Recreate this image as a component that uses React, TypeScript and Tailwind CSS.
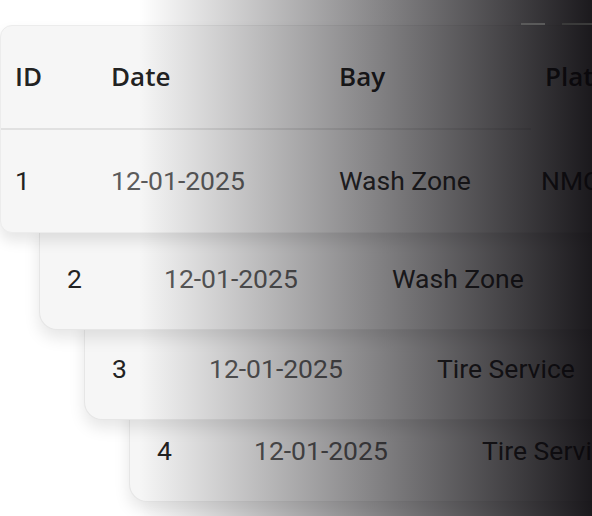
import React from "react";

const rows = [
  { id: "2", date: "12-01-2025", bay: "Wash Zone", plate: "NMC-4821", ml: "ml-[39px]", mt: "mt-[-7px]", z: "z-30" },
  { id: "3", date: "12-01-2025", bay: "Tire Service", plate: "KTR-1290", ml: "ml-[84px]", mt: "mt-[-14px]", z: "z-20" },
  { id: "4", date: "12-01-2025", bay: "Tire Service", plate: "PLX-7743", ml: "ml-[129px]", mt: "mt-[-22px]", z: "z-10" },
];

const roboto = { fontFamily: "Roboto, 'Liberation Sans', sans-serif" };
const open = { fontFamily: "'Open Sans', 'Noto Sans', sans-serif" };

export default function App() {
  return (
    <div className="relative w-[592px] h-[516px] overflow-hidden bg-white">
      <div className="flex flex-col pt-[25px]">
        {/* Card 1: header + first row */}
        <div className="relative z-40 w-[720px] rounded-l-[12px] bg-[#f6f6f6] border border-[#ececec] shadow-[0_8px_14px_rgba(0,0,0,0.10)]">
          <div
            className="grid grid-cols-[96px_228px_206px_1fr] items-center h-[102px] pl-[14px] pb-[2px] text-[26px] font-semibold text-[#222]"
            style={open}
          >
            <span>ID</span>
            <span>Date</span>
            <span>Bay</span>
            <span>Plate</span>
          </div>
          <div className="h-[2px] w-[530px] bg-[#e1e1e1]" />
          <div
            className="grid grid-cols-[96px_228px_206px_1fr] items-center h-[102px] pl-[14px] text-[26.5px]"
            style={roboto}
          >
            <span className="text-[#222]">1</span>
            <span className="text-[#5c5c5c]">12-01-2025</span>
            <span className="text-[#2e2e2e]">Wash Zone</span>
            <span className="text-[#2e2e2e] ml-[-4px]">NMC-4821</span>
          </div>
        </div>

        {rows.map((r) => (
          <div
            key={r.id}
            className={`relative ${r.z} ${r.ml} ${r.mt} w-[720px] h-[104px] rounded-bl-[18px] bg-[#f6f6f6] border-b border-l border-[#e6e6e6] shadow-[0_8px_16px_rgba(0,0,0,0.10)]`}
          >
            <div
              className="grid grid-cols-[97px_228px_206px_1fr] items-center h-full pl-[27px] pt-[2px] text-[26.5px]"
              style={roboto}
            >
              <span className="text-[#222]">{r.id}</span>
              <span className="text-[#5c5c5c]">{r.date}</span>
              <span className="text-[#2e2e2e]">{r.bay}</span>
              <span className="text-[#2e2e2e]">{r.plate}</span>
            </div>
          </div>
        ))}
      </div>

      {/* darkening gradient overlay */}
      <div className="pointer-events-none absolute inset-0 z-50 bg-[linear-gradient(to_right,rgba(0,0,0,0)_23.5%,rgba(8,6,10,0.92)_100%)]" />
      <div className="pointer-events-none absolute z-50 top-[23px] left-[521px] w-[24px] h-[2px] bg-[#5a5a5a]" />
      <div className="pointer-events-none absolute z-50 top-[23px] left-[562px] w-[30px] h-[2px] bg-[#3a3a3a]" />
    </div>
  );
}
